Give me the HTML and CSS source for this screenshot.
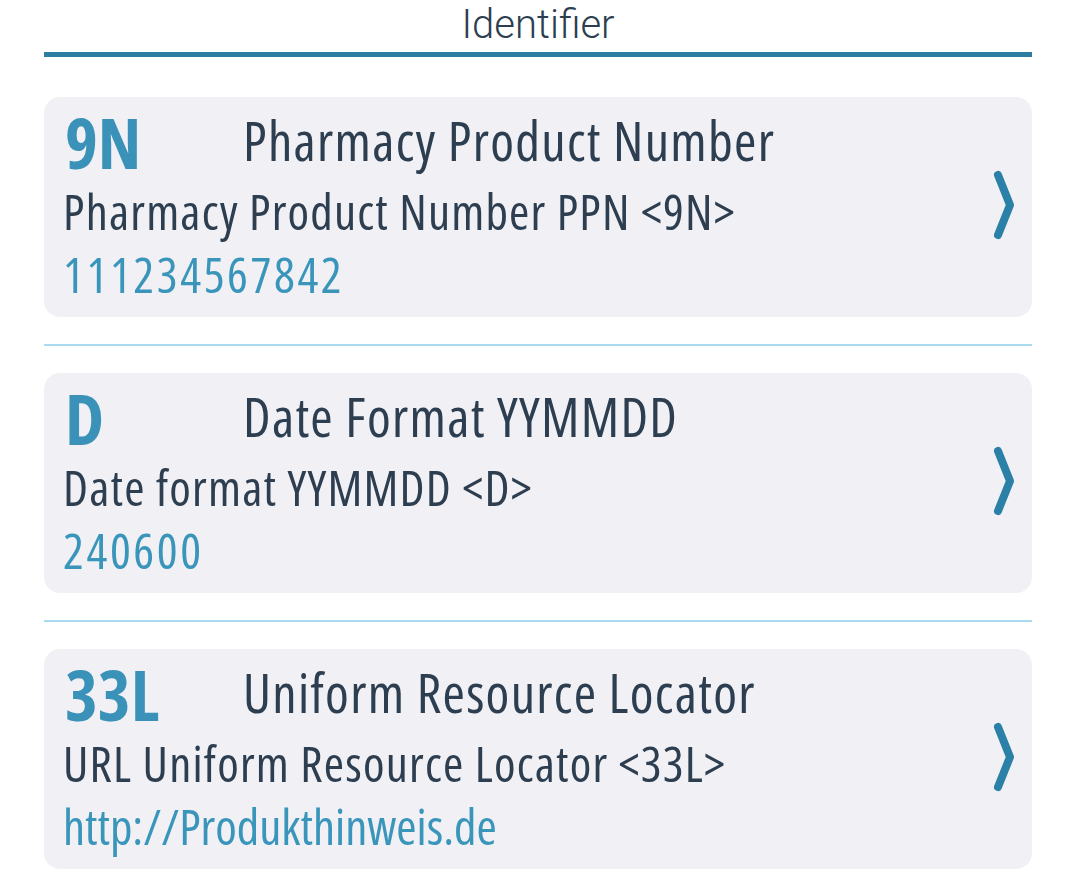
FILE: index.html
```html
<!DOCTYPE html>
<html>
<head>
<meta charset="utf-8">
<link rel="stylesheet" href="styles.css">
</head>
<body>
<div class="page">
  <div class="header">Identifier</div>
  <div class="list">
    <div class="card">
      <div class="content">
        <div class="top">
          <span class="code">9N</span>
          <span class="title">Pharmacy Product Number</span>
        </div>
        <div class="desc">Pharmacy Product Number PPN &lt;9N&gt;</div>
        <div class="value num">111234567842</div>
      </div>
      <svg class="chev" width="30" height="72" viewBox="0 0 30 72"><path d="M8 6 L20 36 L8 66" fill="none" stroke="#2b80a8" stroke-width="8" stroke-linecap="round" stroke-linejoin="round"/></svg>
    </div>
    <div class="divider"></div>
    <div class="card">
      <div class="content">
        <div class="top">
          <span class="code">D</span>
          <span class="title">Date Format YYMMDD</span>
        </div>
        <div class="desc">Date format YYMMDD &lt;D&gt;</div>
        <div class="value num">240600</div>
      </div>
      <svg class="chev" width="30" height="72" viewBox="0 0 30 72"><path d="M8 6 L20 36 L8 66" fill="none" stroke="#2b80a8" stroke-width="8" stroke-linecap="round" stroke-linejoin="round"/></svg>
    </div>
    <div class="divider"></div>
    <div class="card">
      <div class="content">
        <div class="top">
          <span class="code">33L</span>
          <span class="title">Uniform Resource Locator</span>
        </div>
        <div class="desc">URL Uniform Resource Locator &lt;33L&gt;</div>
        <div class="value">http://Produkthinweis.de</div>
      </div>
      <svg class="chev" width="30" height="72" viewBox="0 0 30 72"><path d="M8 6 L20 36 L8 66" fill="none" stroke="#2b80a8" stroke-width="8" stroke-linecap="round" stroke-linejoin="round"/></svg>
    </div>
  </div>
</div>
</body>
</html>
```
FILE: styles.css
```css
html, body {
  margin: 0;
  padding: 0;
  background: #ffffff;
}
.page {
  padding: 0 46px 0 44px;
}
.header {
  font-family: Roboto, "Liberation Sans", sans-serif;
  font-weight: 300;
  font-size: 40px;
  line-height: 50px;
  text-align: center;
  color: #2c3e50;
  padding-bottom: 2px;
  border-bottom: 5px solid #2d7da3;
  margin-bottom: 40px;
}
.card {
  display: flex;
  align-items: center;
  background: #f1f0f5;
  border-radius: 16px;
  height: 220px;
  box-sizing: border-box;
  padding: 9px 12px 13px 19px;
}
.content {
  flex: 1;
  font-family: "Open Sans", "DejaVu Sans Condensed", sans-serif;
  font-stretch: 75%;
  color: #2c3e50;
}
.top {
  display: flex;
  align-items: center;
  height: 70px;
}
.code {
  width: 178px;
  margin-left: 2px;
  flex: none;
  font-weight: 700;
  font-size: 70px;
  line-height: 70px;
  color: #3a92b8;
}
.title {
  font-size: 54px;
  line-height: 54px;
  font-weight: 500;
  letter-spacing: 1.3px;
  color: #2c3e50;
  margin-top: -4px;
}
.desc {
  font-size: 49px;
  line-height: 68px;
  letter-spacing: 1.2px;
  color: #2c3e50;
}
.value {
  font-size: 49px;
  line-height: 58px;
  color: #3a95bb;
}
.value.num {
  letter-spacing: 2.6px;
}
.chev {
  flex: none;
  display: block;
}
.divider {
  height: 2px;
  background: #a9daf0;
  margin: 27px 0;
}
```
